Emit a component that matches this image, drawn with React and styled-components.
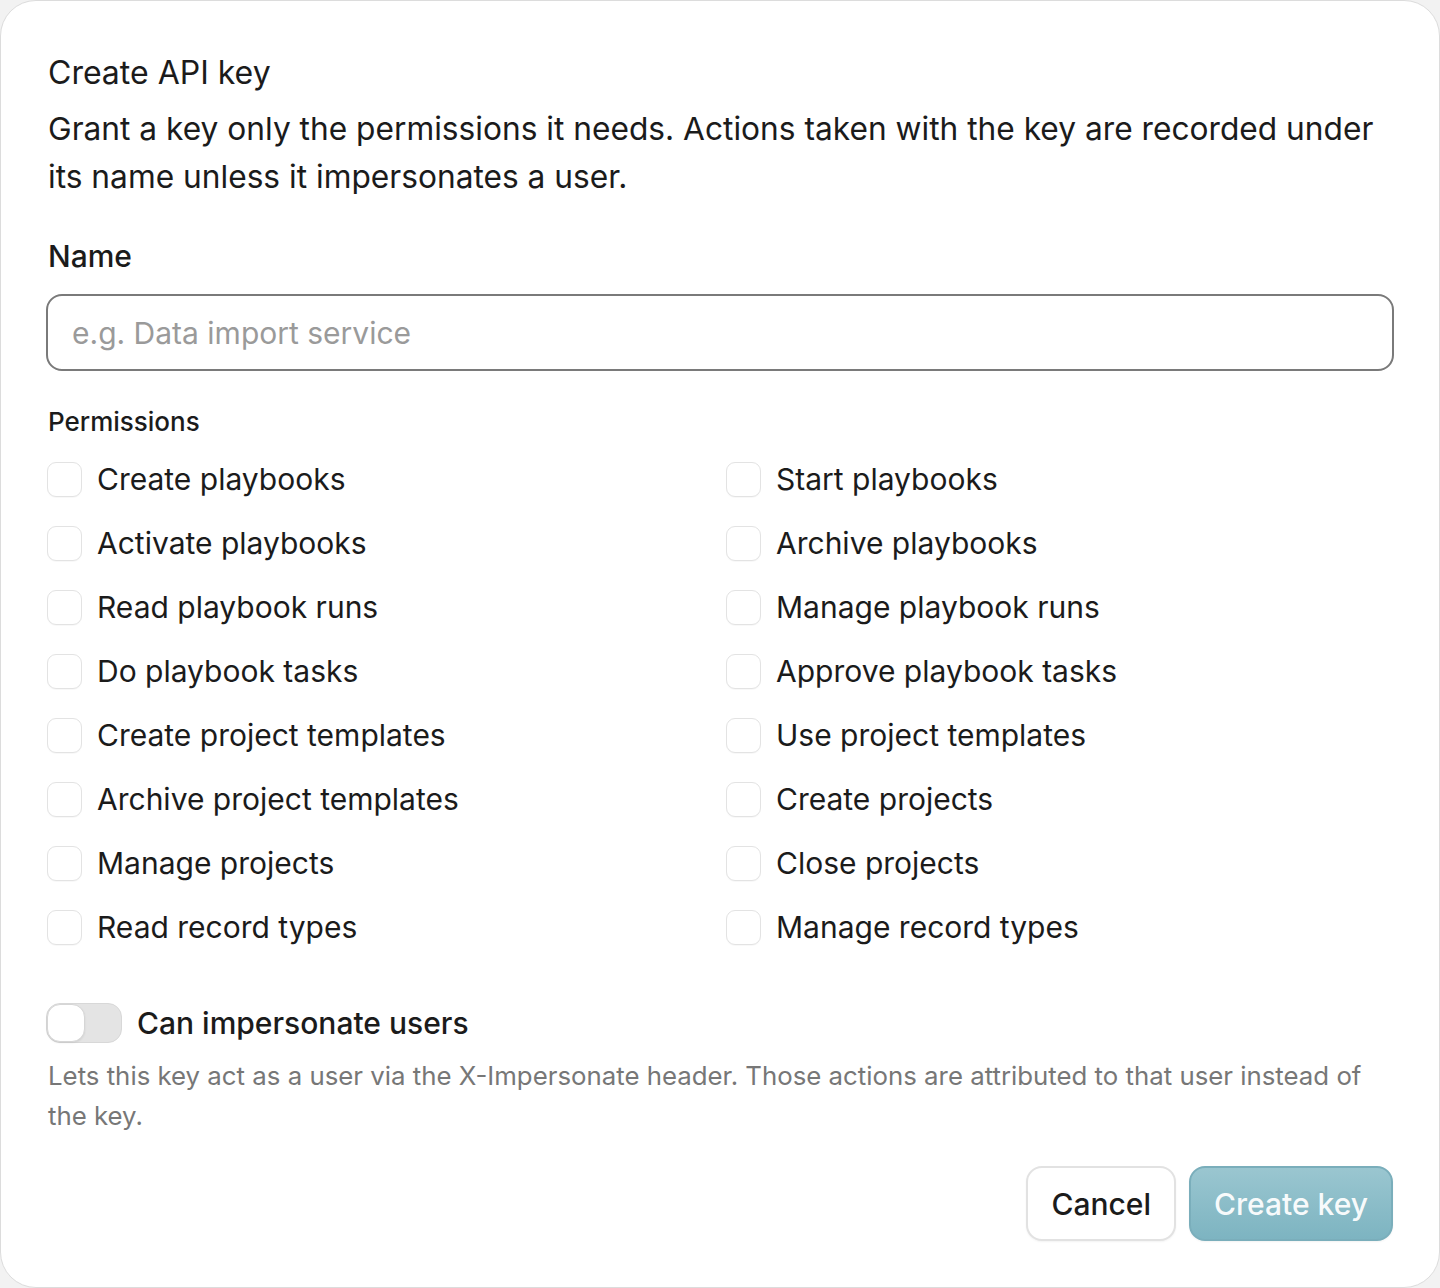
import React, { useState } from "react";
import styled, { createGlobalStyle } from "styled-components";

const GlobalStyle = createGlobalStyle`
  html, body {
    margin: 0;
    padding: 0;
    background: #f2f2f2;
  }
  * {
    box-sizing: border-box;
  }
  body {
    font-family: Inter, "Noto Sans", "Liberation Sans", sans-serif;
    color: #1b1b1b;
  }
`;

const Dialog = styled.div`
  width: 1440px;
  height: 1288px;
  background: #fff;
  border: 1px solid #dcdcdc;
  border-radius: 36px;
  padding: 48px 46px 46px 47px;
  display: flex;
  flex-direction: column;
`;

const Title = styled.h2`
  margin: 0;
  font-size: 32px;
  font-weight: 400;
  line-height: 48px;
`;

const Description = styled.p`
  margin: 8px 0 0;
  font-size: 31.7px;
  line-height: 48px;
  font-weight: 400;
`;

const FieldLabel = styled.label`
  display: block;
  margin-top: 35px;
  font-size: 30px;
  font-weight: 500;
  line-height: 40px;
`;

const TextInput = styled.input`
  margin-top: 18px;
  width: 1348px;
  height: 77px;
  margin-left: -2px;
  border: 2px solid #7a7a7a;
  border-radius: 16px;
  padding: 0 24px;
  font-family: inherit;
  font-size: 30px;
  color: #1b1b1b;
  outline: none;

  &::placeholder {
    color: #9a9a9a;
  }
`;

const SectionLabel = styled.div`
  margin-top: 34px;
  font-size: 26px;
  font-weight: 500;
  line-height: 34px;
`;

const PermissionGrid = styled.div`
  margin-top: 8px;
  display: grid;
  grid-template-columns: 668px 1fr;
  column-gap: 11px;
`;

const CheckRow = styled.label`
  display: flex;
  align-items: center;
  gap: 15px;
  height: 64px;
  font-size: 30px;
  line-height: 40px;
  cursor: pointer;
`;

const Box = styled.span`
  width: 35px;
  height: 35px;
  flex: none;
  margin-left: -1px;
  border-radius: 9px;
  border: 1.5px solid #e3e3e3;
  background: ${(p) => (p.$checked ? "#7fb5c2" : "#fff")};
  box-shadow: 0 1px 1px rgba(0, 0, 0, 0.03);
`;

const ToggleRow = styled.label`
  margin-top: 44px;
  display: flex;
  align-items: center;
  gap: 15px;
  font-size: 30px;
  font-weight: 500;
  line-height: 40px;
  margin-left: -2px;
  cursor: pointer;
`;

const Track = styled.span`
  width: 76px;
  height: 40px;
  flex: none;
  border-radius: 14px;
  background: ${(p) => (p.$on ? "#7fb5c2" : "#e4e4e4")};
  border: 1px solid #d8d8d8;
  display: flex;
  justify-content: ${(p) => (p.$on ? "flex-end" : "flex-start")};
`;

const Knob = styled.span`
  width: 38px;
  height: 38px;
  border-radius: 13px;
  background: #fff;
  border: 1.5px solid #d6d6d6;
  box-shadow: 0 1px 2px rgba(0, 0, 0, 0.08);
`;

const Hint = styled.p`
  margin: 13px 0 0;
  font-size: 25.8px;
  line-height: 40px;
  color: #777;
`;

const Footer = styled.div`
  margin-top: auto;
  display: flex;
  justify-content: flex-end;
  gap: 13px;
`;

const Button = styled.button`
  height: 75px;
  padding: 0 23px;
  border-radius: 16px;
  font-family: inherit;
  font-size: 30px;
  font-weight: 500;
  cursor: pointer;
  border: 2px solid ${(p) => (p.$primary ? "#7aaebb" : "#e2e2e2")};
  background: ${(p) =>
    p.$primary ? "linear-gradient(#9ac6d0, #7db4c1)" : "#fff"};
  color: ${(p) => (p.$primary ? "rgba(255,255,255,0.95)" : "#1b1b1b")};
  box-shadow: 0 1px 2px rgba(0, 0, 0, 0.05);
`;

const permissions = [
  ["Create playbooks", "Start playbooks"],
  ["Activate playbooks", "Archive playbooks"],
  ["Read playbook runs", "Manage playbook runs"],
  ["Do playbook tasks", "Approve playbook tasks"],
  ["Create project templates", "Use project templates"],
  ["Archive project templates", "Create projects"],
  ["Manage projects", "Close projects"],
  ["Read record types", "Manage record types"],
];

const Check = ({ label, checked, onToggle }) => (
  <CheckRow onClick={onToggle}>
    <Box $checked={checked} />
    {label}
  </CheckRow>
);

export default function App() {
  const [checked, setChecked] = useState({});
  const [impersonate, setImpersonate] = useState(false);

  const toggle = (name) => setChecked((c) => ({ ...c, [name]: !c[name] }));

  return (
    <>
      <GlobalStyle />
      <Dialog>
        <Title>Create API key</Title>
        <Description>
          Grant a key only the permissions it needs. Actions taken with the key
          are recorded under its name unless it impersonates a user.
        </Description>

        <FieldLabel htmlFor="key-name">Name</FieldLabel>
        <TextInput id="key-name" placeholder="e.g. Data import service" />

        <SectionLabel>Permissions</SectionLabel>
        <PermissionGrid>
          {permissions.flat().map((p) => (
            <Check key={p} label={p} checked={!!checked[p]} onToggle={() => toggle(p)} />
          ))}
        </PermissionGrid>

        <ToggleRow onClick={() => setImpersonate((v) => !v)}>
          <Track $on={impersonate}>
            <Knob />
          </Track>
          Can impersonate users
        </ToggleRow>
        <Hint>
          Lets this key act as a user via the X-Impersonate header. Those
          actions are attributed to that user instead of the key.
        </Hint>

        <Footer>
          <Button>Cancel</Button>
          <Button $primary>Create key</Button>
        </Footer>
      </Dialog>
    </>
  );
}
